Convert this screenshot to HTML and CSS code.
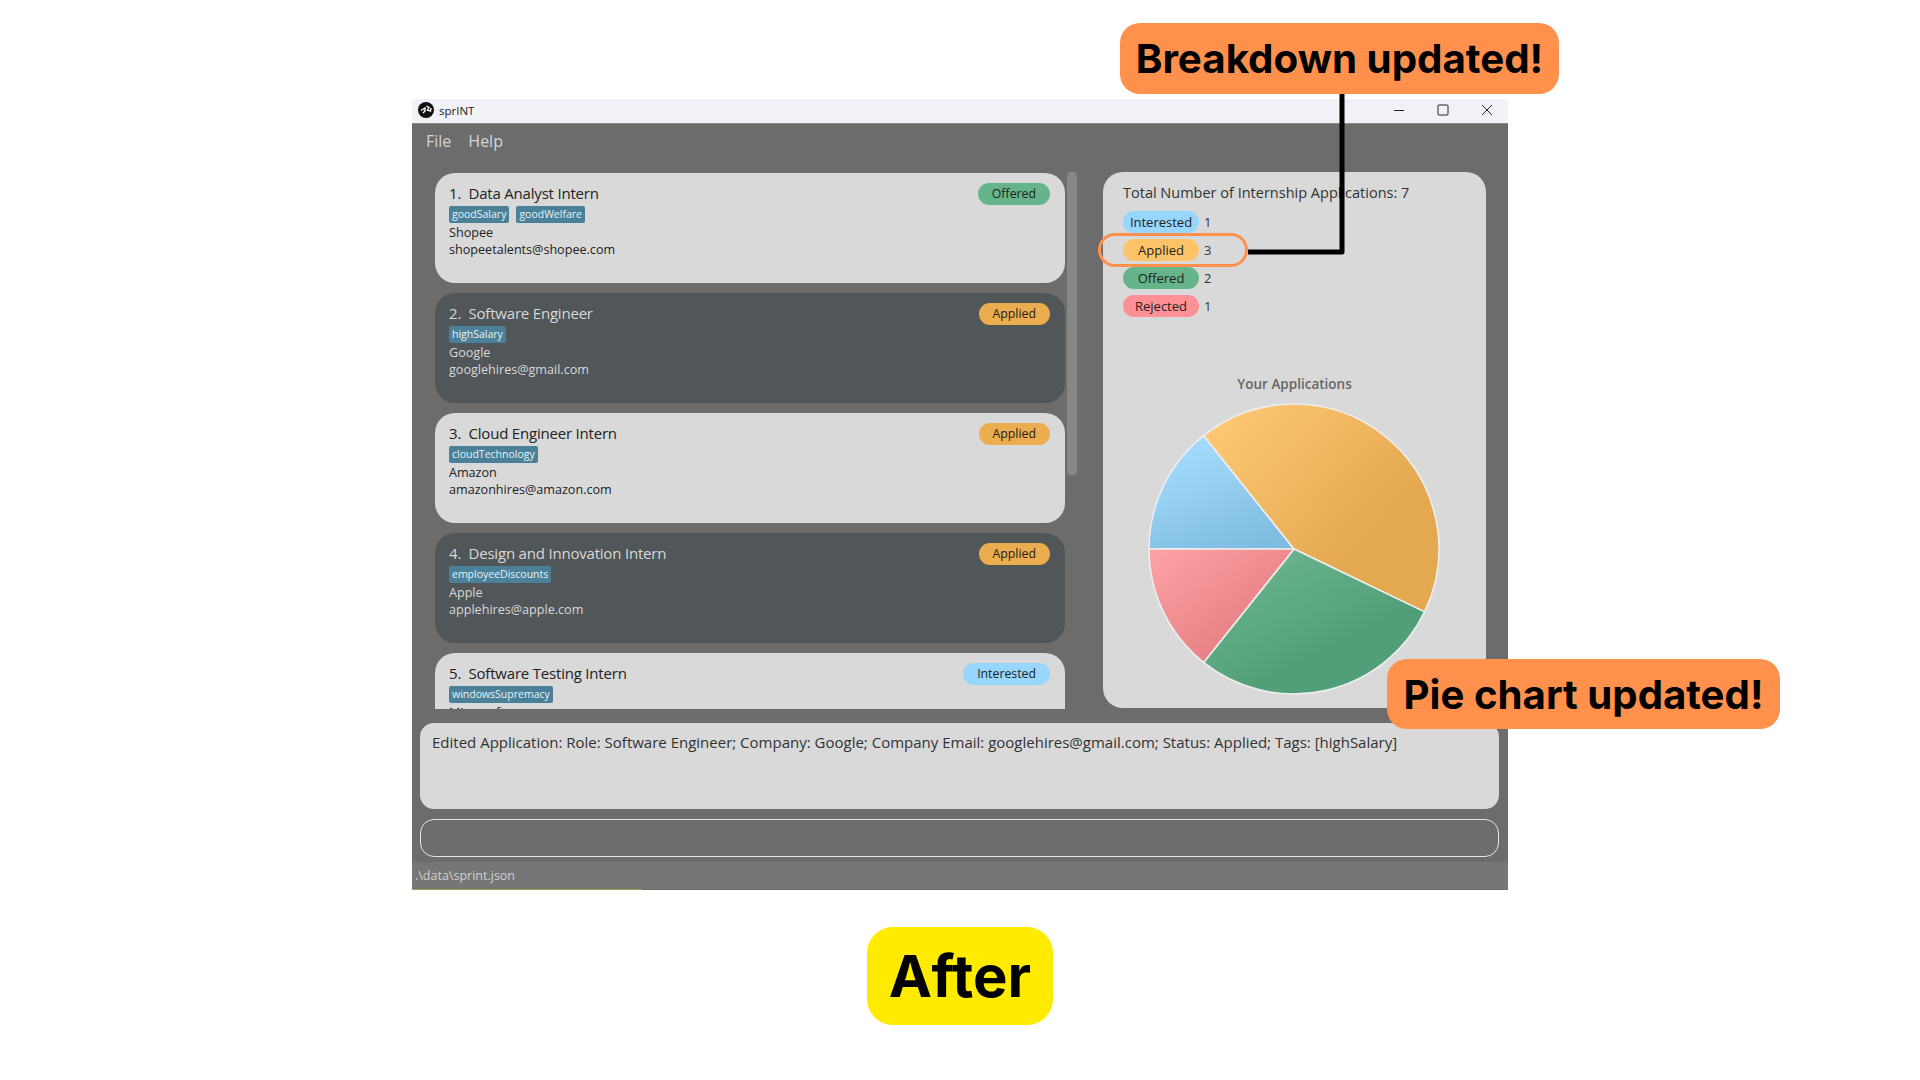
FILE: index.html
```html
<!DOCTYPE html>
<html lang="en">

<head>
    <meta charset="UTF-8">
    <title>sprINT - After</title>
    <link rel="stylesheet" href="styles.css">
</head>

<body>
    <div class="window">
        <div class="titlebar">
            <svg class="logo" viewBox="0 0 16 16">
                <circle cx="8" cy="8" r="8" fill="#111" />
                <path d="M3 8.5 L7 6 L7 9 L5 11 M8.5 4 L11 5.5 L9.5 8 L12.5 9 L13 6" fill="none" stroke="#fff" stroke-width="1.4" />
            </svg>
            <span class="app-name">sprINT</span>
            <div class="win-controls">
                <svg viewBox="0 0 12 12"><path d="M1 6.5H11" stroke="#222" stroke-width="1" /></svg>
                <svg viewBox="0 0 12 12"><rect x="1" y="1" width="10" height="10" rx="1" fill="none" stroke="#222" stroke-width="1" /></svg>
                <svg viewBox="0 0 12 12"><path d="M1 1L11 11M11 1L1 11" stroke="#222" stroke-width="1" /></svg>
            </div>
        </div>

        <div class="menubar">
            <span>File</span>
            <span>Help</span>
        </div>

        <div class="main">
            <div class="list">
                <div class="card">
                    <div class="card-head">
                        <div class="role">1.&nbsp; Data Analyst Intern</div>
                        <span class="pill offered">Offered</span>
                    </div>
                    <div class="tags"><span class="tag">goodSalary</span><span class="tag">goodWelfare</span></div>
                    <div class="info">Shopee</div>
                    <div class="info">shopeetalents@shopee.com</div>
                </div>
                <div class="card dark">
                    <div class="card-head">
                        <div class="role">2.&nbsp; Software Engineer</div>
                        <span class="pill applied">Applied</span>
                    </div>
                    <div class="tags"><span class="tag">highSalary</span></div>
                    <div class="info">Google</div>
                    <div class="info">googlehires@gmail.com</div>
                </div>
                <div class="card">
                    <div class="card-head">
                        <div class="role">3.&nbsp; Cloud Engineer Intern</div>
                        <span class="pill applied">Applied</span>
                    </div>
                    <div class="tags"><span class="tag">cloudTechnology</span></div>
                    <div class="info">Amazon</div>
                    <div class="info">amazonhires@amazon.com</div>
                </div>
                <div class="card dark">
                    <div class="card-head">
                        <div class="role">4.&nbsp; Design and Innovation Intern</div>
                        <span class="pill applied">Applied</span>
                    </div>
                    <div class="tags"><span class="tag">employeeDiscounts</span></div>
                    <div class="info">Apple</div>
                    <div class="info">applehires@apple.com</div>
                </div>
                <div class="card">
                    <div class="card-head">
                        <div class="role">5.&nbsp; Software Testing Intern</div>
                        <span class="pill interested">Interested</span>
                    </div>
                    <div class="tags"><span class="tag">windowsSupremacy</span></div>
                    <div class="info">Microsoft</div>
                </div>
            </div>

            <div class="scrollbar">
                <div class="thumb"></div>
            </div>

            <div class="stats">
                <div class="stats-title">Total Number of Internship Applications: 7</div>
                <div class="stat-rows">
                    <div class="stat-row"><span class="pill wide interested">Interested</span><span>1</span></div>
                    <div class="stat-row"><span class="pill wide applied-soft">Applied</span><span>3</span></div>
                    <div class="stat-row"><span class="pill wide offered">Offered</span><span>2</span></div>
                    <div class="stat-row"><span class="pill wide rejected">Rejected</span><span>1</span></div>
                </div>
                <div class="chart-title">Your Applications</div>
                <svg class="pie" viewBox="-146 -146 292 292">
                    <defs>
                        <linearGradient id="gradBlue" x1="0.2" y1="0" x2="0.7" y2="1">
                            <stop offset="0" stop-color="#a8deff" />
                            <stop offset="1" stop-color="#7ebce0" />
                        </linearGradient>
                        <linearGradient id="gradOrange" x1="0" y1="0" x2="1" y2="0.8">
                            <stop offset="0" stop-color="#ffca78" />
                            <stop offset="0.75" stop-color="#e4a950" />
                            <stop offset="1" stop-color="#e4a950" />
                        </linearGradient>
                        <linearGradient id="gradGreen" x1="0" y1="0" x2="0.8" y2="1">
                            <stop offset="0" stop-color="#70b994" />
                            <stop offset="0.7" stop-color="#519f78" />
                            <stop offset="1" stop-color="#519f78" />
                        </linearGradient>
                        <linearGradient id="gradRed" x1="0" y1="0" x2="1" y2="1">
                            <stop offset="0" stop-color="#ffa3a7" />
                            <stop offset="1" stop-color="#dd7276" />
                        </linearGradient>
                    </defs>
                    <g stroke="#eeeeee" stroke-width="1.6" stroke-linejoin="round">
                        <path fill="url(#gradBlue)" d="M0 0L-145 0A145 145 0 0 1-90.4-113.4Z" />
                        <path fill="url(#gradOrange)" d="M0 0L-90.4-113.4A145 145 0 0 1 130.6 62.9Z" />
                        <path fill="url(#gradGreen)" d="M0 0L130.6 62.9A145 145 0 0 1-90.4 113.4Z" />
                        <path fill="url(#gradRed)" d="M0 0L-90.4 113.4A145 145 0 0 1-145 0Z" />
                    </g>
                </svg>
            </div>
        </div>

        <div class="result">Edited Application: Role: Software Engineer; Company: Google; Company Email: googlehires@gmail.com; Status: Applied; Tags: [highSalary]</div>
        <div class="command"></div>
        <div class="statusbar">.\data\sprint.json</div>
        <div class="edge"></div>
    </div>

    <!-- Annotations on top of the screenshot -->
    <div class="highlight"></div>
    <svg class="connector" viewBox="0 0 110 170">
        <path d="M98 0V158H4" fill="none" stroke="#000" stroke-width="5" stroke-linejoin="round" />
    </svg>
    <div class="callout breakdown">Breakdown updated!</div>
    <div class="callout piechart">Pie chart updated!</div>
    <div class="callout after">After</div>
</body>

</html>
```

FILE: styles.css
```css
body {
    margin: 0;
    width: 1920px;
    height: 1080px;
    overflow: hidden;
    position: relative;
    background-color: #fff;
    font-family: "Open Sans", Arial, sans-serif;
}

/* App window */
.window {
    position: absolute;
    left: 412px;
    top: 99px;
    width: 1096px;
    height: 791px;
    display: flex;
    flex-direction: column;
    background-color: #6c6c6c;
}

.titlebar {
    height: 25px;
    display: flex;
    align-items: center;
    padding: 0 15px 2px 6px;
    background-color: #f1f2f7;
    border-bottom: 1px solid #8a8a8a;
    box-sizing: border-box;
}

.logo {
    width: 16px;
    height: 16px;
}

.app-name {
    margin-left: 5px;
    font-size: 11.5px;
    color: #222;
}

.win-controls {
    margin-left: auto;
    display: flex;
    gap: 32px;
}

.win-controls svg {
    width: 12px;
    height: 12px;
}

.menubar {
    height: 34px;
    display: flex;
    align-items: center;
    gap: 17px;
    padding-left: 14px;
    font-size: 16px;
    color: #d4d4d4;
}

.main {
    height: 537px;
    margin-top: 14px;
    display: flex;
    padding-left: 23px;
}

.list {
    width: 630px;
    height: 536px;
    margin-top: 1px;
    overflow: hidden;
    display: flex;
    flex-direction: column;
    gap: 10px;
}

.card {
    flex: none;
    height: 110px;
    box-sizing: border-box;
    padding: 9px 15px 0 14px;
    border-radius: 20px;
    background-color: #d9d9d9;
    color: #222;
}

.card.dark {
    background-color: #515658;
    color: #d8d8d8;
}

.card-head {
    display: flex;
    justify-content: space-between;
    height: 24px;
}

.card-head .pill {
    margin-top: 1px;
}

.role {
    font-size: 15px;
    font-weight: 500;
    letter-spacing: -0.2px;
    line-height: 22px;
}

.tags {
    display: flex;
    gap: 7px;
    margin-bottom: 1px;
}

.tag {
    height: 17px;
    line-height: 17px;
    padding: 0 3px;
    border-radius: 2px;
    font-size: 10.5px;
    color: #e8f2f6;
    background-color: #4a8199;
}

.info {
    font-size: 12.6px;
    line-height: 17px;
}

.pill {
    height: 22px;
    line-height: 22px;
    padding: 0 14px;
    border-radius: 11px;
    font-size: 12.3px;
    color: #222;
    text-align: center;
}

.pill.wide {
    box-sizing: border-box;
    width: 76px;
    padding: 0;
    font-size: 13px;
}

.offered {
    background-color: #66b48c;
}

.applied {
    background-color: #ecad4e;
}

.applied-soft {
    background-color: #fdc368;
}

.interested {
    background-color: #97d6ff;
}

.rejected {
    background-color: #ff9095;
}

.scrollbar {
    width: 10px;
    margin-left: 2px;
}

.thumb {
    height: 303px;
    border-radius: 4px;
    background-color: #878787;
}

.stats {
    width: 383px;
    height: 536px;
    margin-left: 26px;
    box-sizing: border-box;
    padding: 10px 20px 0;
    border-radius: 20px;
    background-color: #d9d9d9;
    color: #333;
}

.stats-title {
    font-size: 14.5px;
    font-weight: 500;
    line-height: 22px;
}

.stat-rows {
    display: flex;
    flex-direction: column;
    gap: 6px;
    margin-top: 7px;
}

.stat-row {
    display: flex;
    align-items: center;
    gap: 5px;
    font-size: 13px;
}

.chart-title {
    margin-top: 57px;
    text-align: center;
    font-size: 13.5px;
    font-weight: 600;
    line-height: 20px;
    color: #666;
}

.pie {
    display: block;
    width: 292px;
    height: 292px;
    margin: 9px 0 0 25px;
}

.result {
    height: 86px;
    margin: 14px 9px 0 8px;
    box-sizing: border-box;
    padding: 8px 12px;
    border-radius: 14px;
    background-color: #d9d9d9;
    font-size: 15px;
    line-height: 22px;
    color: #333;
}

.command {
    height: 38px;
    margin: 10px 9px 0 8px;
    box-sizing: border-box;
    border: 1px solid #e4e4e4;
    border-radius: 14px;
}

.statusbar {
    height: 27px;
    margin-top: 5px;
    padding-left: 3px;
    font-size: 12.5px;
    line-height: 27px;
    color: #d0d0d0;
    background-color: #767676;
}

.edge {
    height: 1px;
    background: linear-gradient(90deg, #a39a55 0 21%, #6e6e6e 21% 100%);
}

/* Annotations */
.highlight {
    position: absolute;
    left: 1098px;
    top: 233px;
    width: 150px;
    height: 34px;
    box-sizing: border-box;
    border: 3px solid #ff914d;
    border-radius: 17px;
}

.connector {
    position: absolute;
    left: 1244px;
    top: 94px;
    width: 110px;
    height: 170px;
}

.callout {
    position: absolute;
    display: flex;
    align-items: center;
    justify-content: center;
    border-radius: 20px;
    background-color: #ff914d;
    color: #000;
    font-family: Inter, "Open Sans", sans-serif;
    font-weight: 700;
    white-space: nowrap;
}

.breakdown {
    left: 1120px;
    top: 23px;
    width: 439px;
    height: 71px;
    font-size: 40.3px;
}

.piechart {
    left: 1387px;
    top: 659px;
    width: 393px;
    height: 70px;
    font-size: 40.2px;
}

.after {
    left: 867px;
    top: 927px;
    width: 186px;
    height: 98px;
    border-radius: 26px;
    font-size: 58px;
    background-color: #ffeb00;
}
```
